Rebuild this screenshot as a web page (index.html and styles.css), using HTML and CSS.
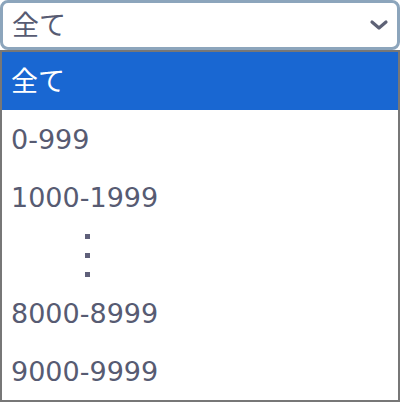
FILE: index.html
```html
<!DOCTYPE html>
<html lang="ja">
<head>
<meta charset="utf-8">
<link rel="stylesheet" href="styles.css">
</head>
<body>
<div class="select">
  <span class="value">全て</span>
  <svg class="chev" width="20" height="14" viewBox="0 0 20 14"><path d="M3 4 L10 10 L17 4" fill="none" stroke="#5e6276" stroke-width="3.2" stroke-linecap="round" stroke-linejoin="round"/></svg>
</div>
<ul class="list">
  <li class="opt selected">全て</li>
  <li class="opt">0-999</li>
  <li class="opt">1000-1999</li>
  <li class="opt gap"><span class="dots"><i></i><i></i><i></i></span></li>
  <li class="opt">8000-8999</li>
  <li class="opt">9000-9999</li>
</ul>
</body>
</html>
```
FILE: styles.css
```css
html, body {
  margin: 0;
  padding: 0;
  background: #ffffff;
}
body {
  width: 400px;
  height: 402px;
  overflow: hidden;
  font-family: "DejaVu Sans", "Noto Sans CJK JP", sans-serif;
  font-size: 27px;
  color: #575b72;
}
.select {
  box-sizing: border-box;
  height: 50px;
  border: 3px solid #8ca5bc;
  border-radius: 8px;
  display: flex;
  align-items: center;
  justify-content: space-between;
  padding: 0 8px 0 9px;
  background: #fff;
}
.value {
  line-height: 1;
}
.chev {
  display: block;
  margin-top: 0;
}
.list {
  box-sizing: border-box;
  list-style: none;
  margin: 0;
  padding: 0;
  height: 352px;
  border: 2px solid #777777;
  display: flex;
  flex-direction: column;
}
.opt {
  height: 58px;
  display: flex;
  align-items: center;
  padding-left: 9px;
  line-height: 1;
}
.opt.selected {
  background: #1967d2;
  color: #ffffff;
}
.gap {
  padding-left: 0;
}
.dots {
  display: flex;
  flex-direction: column;
  gap: 14px;
  margin-left: 83px;
}
.dots i {
  display: block;
  width: 5px;
  height: 5px;
  background: #5f607a;
}
```
